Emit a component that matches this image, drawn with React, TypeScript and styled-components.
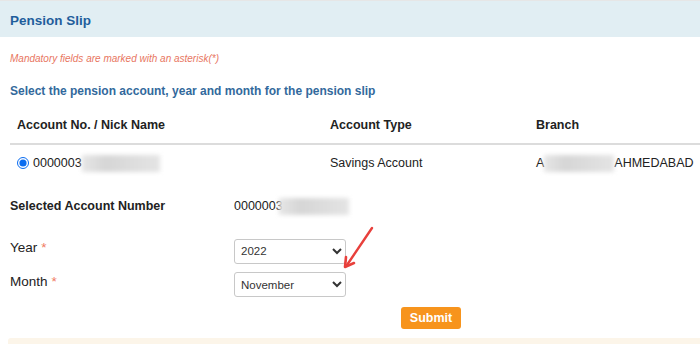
import styled, { createGlobalStyle } from "styled-components";

const GlobalStyle = createGlobalStyle`
  html, body {
    margin: 0;
    padding: 0;
    background: #fff;
    font-family: "Liberation Sans", Arial, sans-serif;
  }
`

const Page = styled.div`
  position: relative;
  width: 700px;
  height: 344px;
  overflow: hidden;
  background: #fff;
`

const Header = styled.div`
  border-top: 1px solid #e6e6e6;
  background: #e1eef3;
  display: flex;
  align-items: center;
  padding: 2px 0 0 10px;
  box-sizing: border-box;
  height: 37px;
`

const Title = styled.h1`
  margin: 0;
  font-size: 13.5px;
  font-weight: 700;
  color: #1f5e9c;
`

const Mandatory = styled.p`
  margin: 16px 0 0 10px;
  font-size: 10px;
  font-style: italic;
  color: #e8765f;
  line-height: 12px;
`

const Instruction = styled.p`
  margin: 19px 0 0 10px;
  font-size: 12px;
  font-weight: 700;
  color: #32699c;
  line-height: 14px;
`

const Table = styled.div`
  margin: 8px 0 0 10px;
`

const Row = styled.div<{ $head?: boolean }>`
  display: grid;
  grid-template-columns: 313px 206px 1fr;
  align-items: center;
  height: ${p => (p.$head ? "37px" : "36px")};
  border-bottom: ${p => (p.$head ? "2px solid #dcdcdc" : "none")};
  font-size: 12.5px;
  font-weight: ${p => (p.$head ? 700 : 400)};
  color: #222;
`

const Cell = styled.div`
  padding-left: 7px;
  display: flex;
  align-items: center;
  white-space: nowrap;
`

const Radio = styled.input`
  margin: 0 4px 0 0;
  width: 12px;
  height: 12px;
  accent-color: #0a6cf0;
`

const Blur = styled.span<{ $w: number }>`
  display: inline-block;
  width: ${p => p.$w}px;
  height: 17px;
  background: linear-gradient(90deg, #e6e6e6, #d6d6d6 30%, #dcdcdc 60%, #e4e4e4);
  filter: blur(2px);
`

const FormRow = styled.div<{ $h: number }>`
  display: flex;
  align-items: center;
  height: ${p => p.$h}px;
  padding-left: 10px;
  font-size: 12.5px;
  color: #222;
`

const Label = styled.div<{ $bold?: boolean }>`
  width: 224px;
  font-weight: ${p => (p.$bold ? 700 : 400)};
  font-size: ${p => (p.$bold ? "12.5px" : "13.5px")};
  flex-shrink: 0;
`

const Star = styled.span`
  color: #f07a62;
  margin-left: 4px;
`

const Value = styled.div`
  display: flex;
  align-items: center;
`

const Select = styled.select`
  width: 112px;
  height: 25px;
  margin-top: 7px;
  border: 1px solid #c8c8c8;
  border-radius: 3px;
  background: #fff;
  font-family: "Liberation Sans", Arial, sans-serif;
  font-size: 11.5px;
  color: #333;
  padding: 0 2px;
`

const Actions = styled.div`
  display: flex;
  padding-left: 401px;
  margin-top: 9px;
`

const Submit = styled.button`
  width: 60px;
  height: 22px;
  border: none;
  border-radius: 3px;
  background: #f7941d;
  color: #fff;
  font-family: "Liberation Sans", Arial, sans-serif;
  font-size: 12.5px;
  font-weight: 700;
  padding: 0;
`

const Footer = styled.div`
  margin: 9px 0 0 8px;
  height: 20px;
  background: #fcf5e9;
  border-top-left-radius: 3px;
`

const Arrow = styled.svg`
  position: absolute;
  left: 338px;
  top: 224px;
`

export default function App() {
  return (
    <Page>
      <GlobalStyle />
      <Header>
        <Title>Pension Slip</Title>
      </Header>
      <Mandatory>Mandatory fields are marked with an asterisk(*)</Mandatory>
      <Instruction>Select the pension account, year and month for the pension slip</Instruction>
      <Table>
        <Row $head>
          <Cell>Account No. / Nick Name</Cell>
          <Cell>Account Type</Cell>
          <Cell>Branch</Cell>
        </Row>
        <Row>
          <Cell>
            <Radio type="radio" name="acc" defaultChecked />
            0000003<Blur $w={78} />
          </Cell>
          <Cell>Savings Account</Cell>
          <Cell>
            A<Blur $w={70} />AHMEDABAD
          </Cell>
        </Row>
      </Table>
      <FormRow $h={50}>
        <Label $bold>Selected Account Number</Label>
        <Value>
          0000003<Blur $w={70} style={{ marginLeft: -4 }} />
        </Value>
      </FormRow>
      <FormRow $h={33}>
        <Label>Year<Star>*</Star></Label>
        <Select defaultValue="2022">
          <option>2021</option>
          <option>2022</option>
          <option>2023</option>
        </Select>
      </FormRow>
      <FormRow $h={34}>
        <Label>Month<Star>*</Star></Label>
        <Select defaultValue="November">
          <option>October</option>
          <option>November</option>
          <option>December</option>
        </Select>
      </FormRow>
      <Actions>
        <Submit>Submit</Submit>
      </Actions>
      <Footer />
      <Arrow width="40" height="48" viewBox="0 0 40 48">
        <line x1="34" y1="4" x2="9" y2="41" stroke="#e8403c" strokeWidth="2.4" strokeLinecap="round" />
        <polyline points="8,33 7,43 16,39" fill="none" stroke="#e8403c" strokeWidth="2.6" strokeLinecap="round" strokeLinejoin="round" />
      </Arrow>
    </Page>
  );
}
